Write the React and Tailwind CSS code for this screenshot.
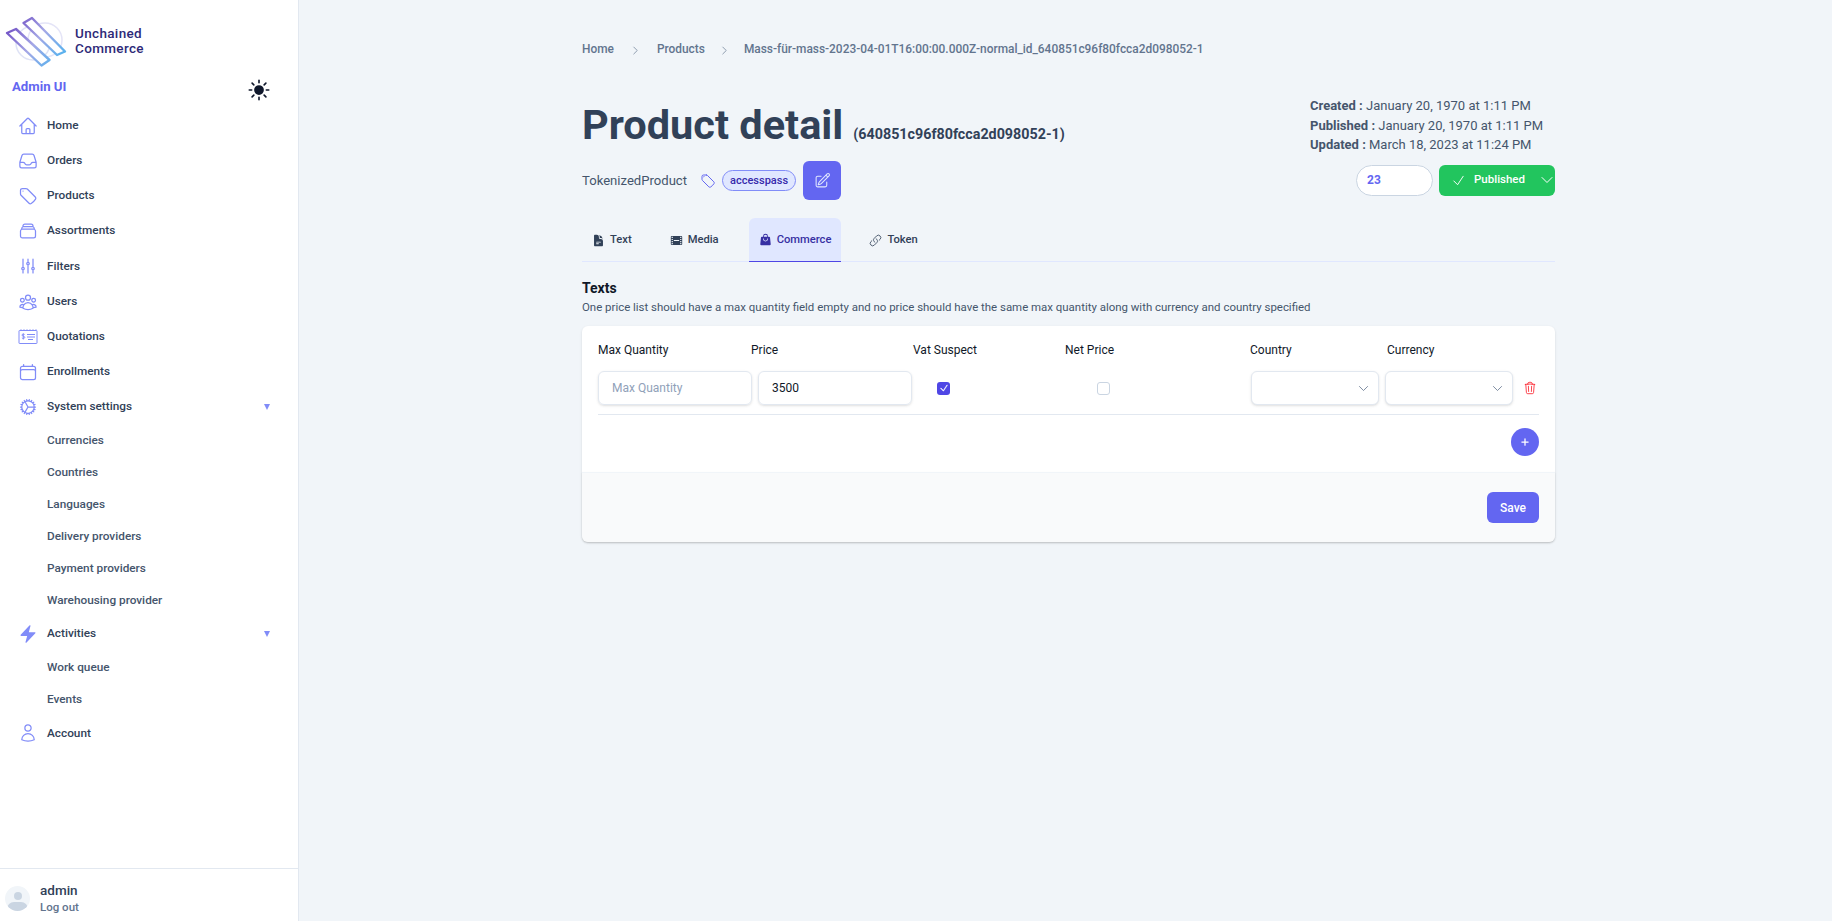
import {
  HiOutlineHome,
  HiOutlineInbox,
  HiOutlineTag,
  HiOutlineRectangleStack,
  HiOutlineAdjustmentsVertical,
  HiOutlineUserGroup,
  HiOutlineCalendar,
  HiOutlineCog,
  HiBolt,
  HiOutlineUser,
  HiSun,
  HiDocumentText,
  HiFilm,
  HiShoppingBag,
  HiOutlineLink,
  HiOutlinePencilSquare,
  HiOutlineCheck,
  HiOutlineChevronDown,
  HiOutlineChevronRight,
  HiOutlineTrash,
  HiOutlinePlus,
  HiCheck,
} from 'react-icons/hi2'

const QuotationIcon = ({ className }) => (
  <svg className={className} viewBox="0 0 20 18" fill="none" stroke="currentColor" strokeWidth="1">
    <path d="M1.5 2.5h17a.5.5 0 0 1 .5.5v12a.5.5 0 0 1-.5.5h-17a.5.5 0 0 1-.5-.5V3a.5.5 0 0 1 .5-.5z" />
    <path d="M3 1v1.5M6 1v1.5M9 1v1.5M12 1v1.5M15 1v1.5M18 1v1.5" strokeWidth="0.7" />
    <path d="M9 6.5h8M9 9h8M10 11.5h5" />
    <path d="M6.6 6.5c-.3-.5-2.6-.8-2.6.6 0 1.5 2.8.8 2.8 2.3 0 1.4-2.5 1.1-2.9.5M5.3 5.5v6" />
  </svg>
)

const Logo = () => (
  <svg className="w-[70px] h-[60px] shrink-0" viewBox="0 10 70 60" fill="none" strokeLinejoin="round">
    <defs>
      <linearGradient id="logoGrad" gradientUnits="userSpaceOnUse" x1="10" y1="20" x2="62" y2="62">
        <stop offset="0" stopColor="#6b46c1" />
        <stop offset="0.5" stopColor="#a5a8e6" />
        <stop offset="1" stopColor="#4fb3ef" />
      </linearGradient>
    </defs>
    <circle cx="33" cy="43" r="17" stroke="#dfe3f6" strokeWidth="1.5" />
    <circle cx="45" cy="40" r="17" stroke="#e4e4f7" strokeWidth="1.5" />
    <path d="M7 33L16 29L49.500 60L41.500 65.500Z" fill="#ffffff" stroke="url(#logoGrad)" strokeWidth="2.4" />
    <path d="M23.500 23L32 18L65 51.500L57 55Z" fill="#ffffff" stroke="url(#logoGrad)" strokeWidth="2.4" />
  </svg>
)

const navItems = [
  { label: 'Home', Icon: HiOutlineHome },
  { label: 'Orders', Icon: HiOutlineInbox },
  { label: 'Products', Icon: HiOutlineTag },
  { label: 'Assortments', Icon: HiOutlineRectangleStack },
  { label: 'Filters', Icon: HiOutlineAdjustmentsVertical },
  { label: 'Users', Icon: HiOutlineUserGroup },
  { label: 'Quotations', Icon: QuotationIcon },
  { label: 'Enrollments', Icon: HiOutlineCalendar },
]

const systemLinks = ['Currencies', 'Countries', 'Languages', 'Delivery providers', 'Payment providers', 'Warehousing provider']
const activityLinks = ['Work queue', 'Events']

const NavRow = ({ label, Icon, caret }) => (
  <a className="flex items-center h-[35.2px] pl-[18px] pr-[28px] text-[11.8px] font-medium text-slate-700">
    <Icon className="w-[20px] h-[20px] text-[#818cf8] mr-[9px]" />
    <span className="flex-1">{label}</span>
    {caret && <span className="w-0 h-0 border-x-[3.5px] border-x-transparent border-t-[6px] border-t-[#818cf8]" />}
  </a>
)

const SubLink = ({ label }) => (
  <a className="flex items-center h-[32px] pl-[47px] text-[11.8px] font-medium text-slate-600">{label}</a>
)

const Sidebar = () => (
  <aside className="w-[299px] shrink-0 h-[921px] bg-white border-r border-slate-200 flex flex-col">
    <div className="flex items-start pt-[10px] h-[72px]">
      <Logo />
      <div className="ml-[5px] mt-[16px] text-[13.5px] leading-[15px] font-medium tracking-wide text-[#2e2a78]">
        <div>Unchained</div>
        <div>Commerce</div>
      </div>
    </div>
    <div className="flex items-center justify-between pl-[12px] pr-[26px] h-[30px]">
      <span className="text-[13.2px] font-bold text-[#6366f1]">Admin UI</span>
      <HiSun className="w-[26px] h-[26px] mt-[6px] text-slate-900" />
    </div>
    <nav className="mt-[6px] flex-1">
      {navItems.map((item) => (
        <NavRow key={item.label} {...item} />
      ))}
      <NavRow label="System settings" Icon={HiOutlineCog} caret />
      {systemLinks.map((label) => (
        <SubLink key={label} label={label} />
      ))}
      <NavRow label="Activities" Icon={HiBolt} caret />
      {activityLinks.map((label) => (
        <SubLink key={label} label={label} />
      ))}
      <NavRow label="Account" Icon={HiOutlineUser} />
    </nav>
    <div className="h-[53px] border-t border-slate-200 flex items-center pl-[5px] pt-[6px]">
      <div className="w-[25px] h-[25px] rounded-full bg-slate-100 overflow-hidden relative shrink-0">
        <div className="absolute left-[8.5px] top-[6px] w-[8px] h-[8px] rounded-full bg-slate-300" />
        <div className="absolute left-[2px] top-[16px] w-[21px] h-[14px] rounded-full bg-slate-300" />
      </div>
      <div className="ml-[10px]">
        <div className="text-[13.5px] leading-[18px] font-medium text-slate-700">admin</div>
        <div className="text-[11.5px] leading-[16px] font-medium text-slate-500">Log out</div>
      </div>
    </div>
  </aside>
)

const tabs = [
  { label: 'Text', Icon: HiDocumentText, gap: 'mr-[18px]' },
  { label: 'Media', Icon: HiFilm, gap: 'mr-[20px]' },
  { label: 'Commerce', Icon: HiShoppingBag, active: true, gap: 'mr-[18px]' },
  { label: 'Token', Icon: HiOutlineLink, gap: 'mr-[18px]' },
]

const Header = () => (
  <div className="flex justify-between">
    <div>
      <h1 className="flex items-baseline pt-[9px] text-slate-700 font-bold">
        <span className="text-[41.5px] leading-[40px]">Product detail</span>
        <span className="text-[14.3px] ml-[10px]">(640851c96f80fcca2d098052-1)</span>
      </h1>
      <div className="flex items-center mt-[16px] h-[39px] text-slate-600">
        <span className="text-[13.1px]">TokenizedProduct</span>
        <HiOutlineTag className="w-[16px] h-[16px] ml-[13px] text-[#6366f1]" />
        <span className="ml-[6px] h-[21px] px-[7px] flex items-center rounded-full border border-[#818cf8] bg-[#e0e7ff] text-[11px] font-medium text-indigo-800">
          accesspass
        </span>
        <button className="ml-[7px] w-[38px] h-[39px] rounded-md bg-[#6366f1] flex items-center justify-center">
          <HiOutlinePencilSquare className="w-[17px] h-[17px] text-indigo-100" />
        </button>
      </div>
    </div>
    <div className="flex flex-col items-end">
      <div className="w-[245px] text-[13px] leading-[19.5px] text-slate-600 whitespace-nowrap">
        <div><b className="font-bold">Created :</b> January 20, 1970 at 1:11 PM</div>
        <div><b className="font-bold">Published :</b> January 20, 1970 at 1:11 PM</div>
        <div><b className="font-bold">Updated :</b> March 18, 2023 at 11:24 PM</div>
      </div>
      <div className="flex mt-[10px] gap-[6px]">
        <div className="w-[77px] h-[31px] rounded-full bg-white border border-slate-300 pl-[10px] flex items-center text-[12px] font-bold text-[#6366f1]">
          23
        </div>
        <button className="w-[116px] h-[31px] rounded-md bg-[#22c55e] flex items-center pl-[12px] text-white">
          <HiOutlineCheck className="w-[15px] h-[15px]" />
          <span className="ml-[8px] text-[11.5px] font-medium">Published</span>
          <HiOutlineChevronDown className="w-[16px] h-[16px] ml-auto" />
        </button>
      </div>
    </div>
  </div>
)

const Tabs = () => (
  <div className="flex mt-[18px] h-[44px] border-b border-[#e0e7ff]">
    {tabs.map(({ label, Icon, active, gap }) => (
      <a
        key={label}
        className={`${gap} ${
          active
            ? 'flex items-center h-[44px] px-[10px] rounded-t-md bg-[#e0e7ff] border-b border-[#4f46e5] text-[11.2px] font-medium text-[#3730a3]'
            : 'flex items-center h-[44px] px-[10px] text-[11.2px] font-medium text-slate-700'
        }`}
      >
        <Icon className="w-[13px] h-[13px] mr-[5px]" />
        {label}
      </a>
    ))}
  </div>
)

const Checkbox = ({ checked }) =>
  checked ? (
    <span className="w-[13px] h-[13px] rounded-[3px] bg-[#4f46e5] flex items-center justify-center">
      <HiCheck className="w-[10px] h-[10px] text-white" strokeWidth={1} />
    </span>
  ) : (
    <span className="block w-[13px] h-[13px] rounded-[3px] border border-slate-300 bg-white" />
  )

const SelectBox = () => (
  <div className="w-[128px] h-[34px] shrink-0 rounded-md border border-slate-200 shadow-sm bg-white flex items-center justify-end pr-[8px]">
    <HiOutlineChevronDown className="w-[13px] h-[13px] text-slate-500" />
  </div>
)

const PriceCard = () => (
  <div className="mt-[10px] w-[973px] rounded-md bg-white shadow-sm">
    <div className="px-[16px] pt-[16px]">
      <div className="grid grid-cols-[153px_162px_152px_185px_137px_1fr] text-[12px] leading-[16px] text-gray-900">
        <span>Max Quantity</span>
        <span>Price</span>
        <span>Vat Suspect</span>
        <span>Net Price</span>
        <span>Country</span>
        <span>Currency</span>
      </div>
      <div className="flex items-center mt-[13px] pb-[9px] border-b border-slate-200 text-[12px]">
        <input
          placeholder="Max Quantity"
          className="w-[154px] h-[34px] rounded-md border border-slate-200 shadow-sm px-[13px] placeholder:text-slate-400 outline-none"
        />
        <input
          defaultValue="3500"
          className="ml-[6px] w-[154px] h-[34px] rounded-md border border-slate-200 shadow-sm px-[13px] text-gray-900 outline-none"
        />
        <div className="ml-[25px] w-[160px]"><Checkbox checked /></div>
        <div className="w-[154px]"><Checkbox /></div>
        <SelectBox />
        <div className="ml-[6px]"><SelectBox /></div>
        <HiOutlineTrash className="ml-[10px] w-[14px] h-[14px] text-red-500" />
      </div>
      <div className="flex justify-end mt-[13px] mb-[16px]">
        <button className="w-[28px] h-[28px] rounded-full bg-[#6366f1] flex items-center justify-center">
          <HiOutlinePlus className="w-[10px] h-[10px] text-white" strokeWidth={3} />
        </button>
      </div>
    </div>
    <div className="h-[70px] bg-gray-50 border-t border-slate-100 rounded-b-md flex items-center justify-end px-[16px] shadow-[0_1px_2px_rgba(0,0,0,0.12)]">
      <button className="w-[52px] h-[31px] rounded-md bg-[#6366f1] text-white text-[12px] font-medium">Save</button>
    </div>
  </div>
)

const App = () => (
  <div className="flex min-h-screen bg-[#f1f5f9] font-['Roboto',sans-serif]">
    <Sidebar />
    <main className="ml-[283px] w-[973px] pt-[41px]">
      <div className="flex items-center text-[11.9px] font-medium text-slate-500 h-[18px]">
        <span>Home</span>
        <HiOutlineChevronRight className="w-[11px] h-[11px] mx-[16px]" />
        <span>Products</span>
        <HiOutlineChevronRight className="w-[11px] h-[11px] mx-[14px]" />
        <span>Mass-für-mass-2023-04-01T16:00:00.000Z-normal_id_640851c96f80fcca2d098052-1</span>
      </div>
      <div className="mt-[37px]">
        <Header />
      </div>
      <Tabs />
      <div className="mt-[17px]">
        <h2 className="text-[14px] leading-[18px] font-bold text-gray-900">Texts</h2>
        <p className="mt-[1px] text-[11.45px] leading-[18px] text-slate-600">
          One price list should have a max quantity field empty and no price should have the same max quantity along with currency and country specified
        </p>
      </div>
      <PriceCard />
    </main>
  </div>
)

export default App
